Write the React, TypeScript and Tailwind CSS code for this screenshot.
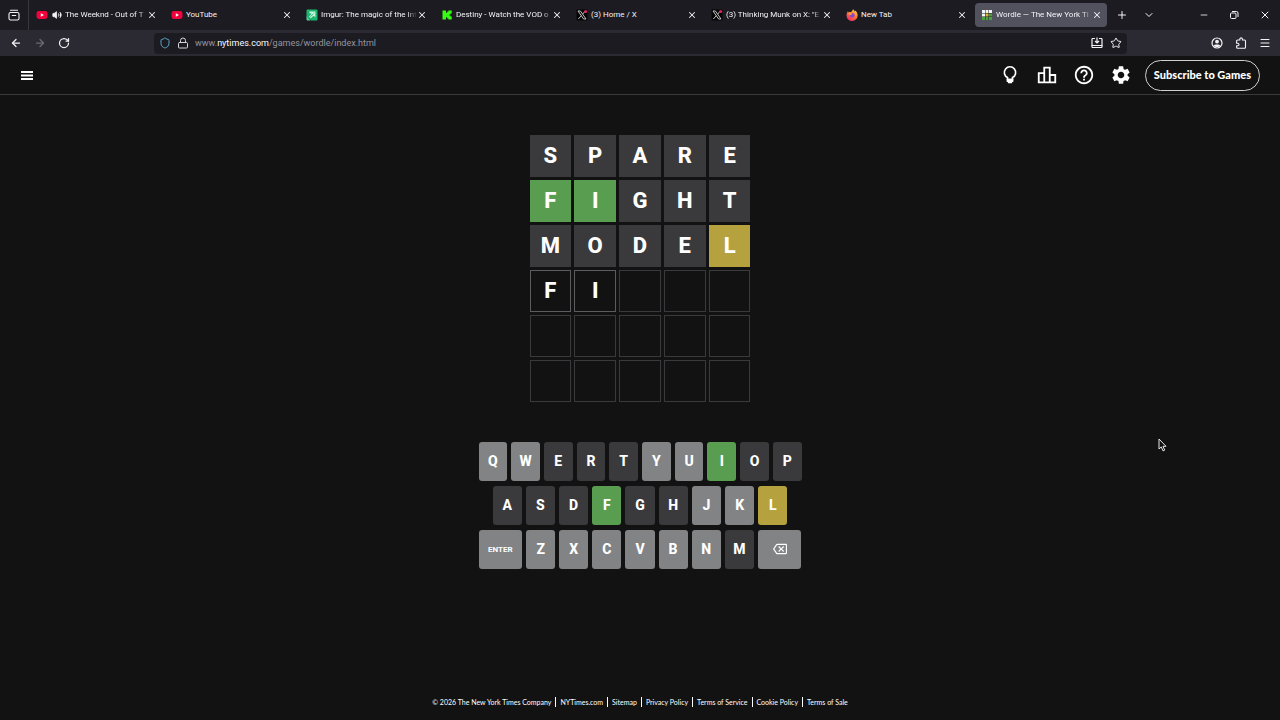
import React from 'react';
import {
  ArrowLeft,
  ArrowRight,
  ChevronDown,
  Lock,
  Menu,
  Minus,
  Plus,
  RotateCw,
  Shield,
  Star,
  Volume2,
  X,
} from 'lucide-react';

type Status = 'correct' | 'present' | 'absent' | 'tbd' | 'empty' | 'unused';

type TabInfo = {
  id: number;
  title: string;
  icon: React.ReactNode;
  playing?: boolean;
  active?: boolean;
  faded?: boolean;
};

const YouTubeIcon = () => (
  <svg className="h-3 w-3 shrink-0" viewBox="0 0 12 12">
    <rect x="0.5" y="2" width="11" height="8" rx="2.4" fill="#f0033c" />
    <path d="M4.8 4.2v3.6L8 6z" fill="#fff" />
  </svg>
);

const ImgurIcon = () => (
  <svg className="h-3 w-3 shrink-0" viewBox="0 0 12 12">
    <path d="M1.5 0.5h9a1 1 0 0 1 1 1v9a1 1 0 0 1-1 1H5L.5 7.5v-6a1 1 0 0 1 1-1z" fill="#1bb76e" />
    <path d="M3.5 2.600h5.900v5.700L7.600 6.700 4.800 9.300 3 7.700l2.800-2.900-2.300-.5z" fill="#c9f5e0" />
    <path d="M7.600 3.900h.6M4.500 7.700l2.800-2.900" stroke="#1bb76e" strokeWidth="0.9" />
    <path d="M.5 7l4 4.500h-3a1 1 0 0 1-1-1z" fill="#4cd49a" />
  </svg>
);

const KickIcon = () => (
  <svg className="h-3 w-3 shrink-0" viewBox="0 0 12 12">
    <path
      d="M1.500 1.500h3.500v2.200h1.200V2.600h1.200V1.500h3.300v3H9.500v1H8.400v1h1.100v1h1.200v3H7.400V9.400H6.200V8.300H5v2.200H1.500z"
      fill="#35ff0e"
    />
  </svg>
);

const XLogoIcon = () => (
  <svg className="h-3 w-3 shrink-0" viewBox="0 0 12 12">
    <rect x="0.5" y="0.5" width="11" height="11" rx="1" fill="#050505" />
    <path d="M2 2h2.400L10 10H7.600z" fill="none" stroke="#d4d4d4" strokeWidth="0.9" />
    <path d="M9.300 2L6.600 5.200M5.300 6.700L2.300 10" stroke="#d4d4d4" strokeWidth="0.9" />
    <circle cx="9.700" cy="2.600" r="1.500" fill="#e0245e" />
  </svg>
);

const FirefoxIcon = () => (
  <svg className="h-3 w-3 shrink-0" viewBox="0 0 12 12">
    <defs>
      <linearGradient id="fox" x1="0.9" y1="0" x2="0.2" y2="1">
        <stop offset="0" stopColor="#ffe14a" />
        <stop offset="0.45" stopColor="#ff7b2e" />
        <stop offset="1" stopColor="#f0246e" />
      </linearGradient>
    </defs>
    <path
      d="M7 .3c1 .7 1.500 1.500 1.700 2.300.5-.2.600-.6.600-1 1.500 1.200 2.300 3 2.300 4.800A5.500 5.500 0 0 1 .5 6.500C.5 4.800 1 3.200 2 2.200l.5 1.200c1-.6 1.700-.5 2.500-.4C5.700 2.200 6.800 1.600 7 .3z"
      fill="url(#fox)"
    />
    <circle cx="6.200" cy="6.300" r="2.400" fill="#8a45d8" />
    <path d="M2.500 3.800c1.800-.4 3 .2 3.900 1.200-.8 1-2 .6-2.300 1.600C2.900 6 2.400 5 2.500 3.800z" fill="#ff9a35" />
  </svg>
);

const WordleIcon = () => (
  <svg className="h-3 w-3 shrink-0" viewBox="0 0 12 12">
    <rect x="1" y="1" width="10" height="10" fill="#222" />
    <path d="M1 1h3v3H1zM4.500 1h3v3h-3zM8 1h3v3H8zM1 4.500h3v3H1z" fill="#f4f4f4" />
    <path d="M4.500 4.500h3v3h-3z" fill="#d4b73f" />
    <path d="M8 4.500h3v3H8zM1 8h3v3H1zM4.500 8h3v3h-3zM8 8h3v3H8z" fill="#4c9e45" />
  </svg>
);

const tabs: TabInfo[] = [
  { id: 1, title: 'The Weeknd - Out of T', icon: <YouTubeIcon />, playing: true, faded: true },
  { id: 2, title: 'YouTube', icon: <YouTubeIcon /> },
  { id: 3, title: 'Imgur: The magic of the Int', icon: <ImgurIcon />, faded: true },
  { id: 4, title: 'Destiny - Watch the VOD o', icon: <KickIcon />, faded: true },
  { id: 5, title: '(3) Home / X', icon: <XLogoIcon /> },
  { id: 6, title: '(3) Thinking Munk on X: "E', icon: <XLogoIcon />, faded: true },
  { id: 7, title: 'New Tab', icon: <FirefoxIcon /> },
  { id: 8, title: 'Wordle — The New York Ti', icon: <WordleIcon />, active: true, faded: true },
];

const guesses = ['SPARE', 'FIGHT', 'MODEL', 'FI', '', ''];

const results: Record<number, Status[]> = {
  0: ['absent', 'absent', 'absent', 'absent', 'absent'],
  1: ['correct', 'correct', 'absent', 'absent', 'absent'],
  2: ['absent', 'absent', 'absent', 'absent', 'present'],
};

const keyStatus: Record<string, Status> = {
  I: 'correct',
  F: 'correct',
  L: 'present',
};
'SPAREGHTMOD'.split('').forEach((letter) => {
  keyStatus[letter] = 'absent';
});

const tileStyles: Record<Status, string> = {
  correct: 'bg-[#599e50]',
  present: 'bg-[#b5a23e]',
  absent: 'bg-[#3a3a3c]',
  tbd: 'border border-[#5c5c5e]',
  empty: 'border border-[#3a3a3c]',
  unused: 'bg-[#818384]',
};

const footerLinks = [
  'NYTimes.com',
  'Sitemap',
  'Privacy Policy',
  'Terms of Service',
  'Cookie Policy',
  'Terms of Sale',
];

const Tab = ({ tab }: { tab: TabInfo }) => (
  <div
    className={`flex h-6 min-w-0 max-w-[132px] flex-1 items-center rounded pr-[5px] pl-[6px] ${
      tab.active ? 'bg-[#52515e]' : ''
    }`}
  >
    {tab.icon}
    {tab.playing && (
      <button aria-label="Mute tab" className="ml-1 shrink-0">
        <Volume2 className="h-[10px] w-[10px]" fill="currentColor" />
      </button>
    )}
    <span
      className={`ml-[3px] min-w-0 flex-1 overflow-hidden whitespace-nowrap ${
        tab.faded ? 'mask-r-from-90%' : ''
      }`}
    >
      {tab.title}
    </span>
    <button aria-label={`Close ${tab.title}`} className="shrink-0">
      <X className="h-[10px] w-[10px]" strokeWidth={2.5} />
    </button>
  </div>
);

const BrowserChrome = () => (
  <div className="font-[Roboto,'Open_Sans',sans-serif] text-[8px] text-[#f3f3f6]">
    {/* Tab strip */}
    <div className="flex h-[30px] items-center bg-[#1c1b22]">
      <button
        aria-label="Firefox View"
        className="flex h-full w-[29px] shrink-0 items-center justify-center border-r border-[#38373f]"
      >
        <svg className="h-3 w-3" viewBox="0 0 12 12" fill="none" stroke="currentColor" strokeWidth="1.100" strokeLinecap="round">
          <rect x="1" y="3.500" width="10" height="7.500" rx="1.600" />
          <path d="M2.500 1.200h7M4.300 6.500h3.400" />
        </svg>
      </button>
      <div className="ml-px flex min-w-0 flex-1 items-center gap-[3px]">
        {tabs.map((tab) => (
          <Tab key={tab.id} tab={tab} />
        ))}
        <button aria-label="New tab" className="ml-[6px] shrink-0">
          <Plus className="h-3 w-3" strokeWidth={2} />
        </button>
        <button aria-label="List all tabs" className="ml-3 shrink-0">
          <ChevronDown className="h-3 w-3" strokeWidth={2} />
        </button>
      </div>
      <div className="flex shrink-0 items-center gap-5 pr-[9px]">
        <button aria-label="Minimize">
          <Minus className="h-[10px] w-[10px]" strokeWidth={2} />
        </button>
        <button aria-label="Restore">
          <svg className="h-[10px] w-[10px]" viewBox="0 0 10 10" fill="none" stroke="currentColor">
            <rect x="1.500" y="3" width="5.500" height="5.500" rx="1" />
            <path d="M3 1.500h4.500a1.500 1.500 0 0 1 1.500 1.500V7" />
          </svg>
        </button>
        <button aria-label="Close window">
          <X className="h-3 w-3" strokeWidth={2} />
        </button>
      </div>
    </div>

    {/* Navigation bar */}
    <div className="flex h-[26px] items-center bg-[#2b2a33]">
      <div className="flex w-[154px] shrink-0 items-center gap-3 pl-[10px]">
        <button aria-label="Back">
          <ArrowLeft className="h-3 w-3" strokeWidth={2.5} />
        </button>
        <button aria-label="Forward" className="text-[#6c6b74]">
          <ArrowRight className="h-3 w-3" strokeWidth={2.5} />
        </button>
        <button aria-label="Reload">
          <RotateCw className="h-3 w-3" strokeWidth={2.5} />
        </button>
      </div>
      <div className="flex h-[21px] min-w-0 flex-1 items-center rounded bg-[#1c1b22] px-[5px]">
        <Shield className="h-3 w-3 shrink-0 text-[#5aa5c4]" />
        <Lock className="ml-[6px] h-3 w-3 shrink-0 text-[#d5d5da]" />
        <a href="#address" className="ml-[6px] flex-1 truncate pt-px text-[9px] text-[#96959d]">
          www.<span className="text-[#fbfbfe]">nytimes.com</span>/games/wordle/index.html
        </a>
        <button aria-label="Install site">
          <svg className="h-3 w-3" viewBox="0 0 12 12" fill="none" stroke="currentColor" strokeWidth="1.200">
            <path d="M4 1.500H1.700a.7.7 0 0 0-.7.7v6.300h10V2.200a.7.7 0 0 0-.7-.7H8" />
            <path d="M6 .5v5M4 4l2 2 2-2M1 10.500h10M1 8.500v2M11 8.500v2" />
          </svg>
        </button>
        <button aria-label="Bookmark" className="ml-[7px]">
          <Star className="h-3 w-3" />
        </button>
      </div>
      <div className="flex w-[153px] shrink-0 items-center justify-end gap-3 pr-[9px]">
        <button aria-label="Account">
          <svg className="h-3 w-3" viewBox="0 0 12 12">
            <circle cx="6" cy="6" r="5" fill="none" stroke="currentColor" strokeWidth="1.200" />
            <circle cx="6" cy="4.600" r="1.900" fill="currentColor" />
            <path d="M2.800 8.500c.6-1.300 5.800-1.300 6.400 0C8.500 9.600 7.300 10 6 10s-2.500-.4-3.200-1.500z" fill="currentColor" />
          </svg>
        </button>
        <button aria-label="Extensions">
          <svg className="h-3 w-3" viewBox="0 0 12 12" fill="none" stroke="currentColor" strokeWidth="1.100" strokeLinejoin="round">
            <path d="M4.800 3V2.200a1.300 1.300 0 0 1 2.600 0V3h2.100a1 1 0 0 1 1 1v6.200a1 1 0 0 1-1 1H2.600a1 1 0 0 1-1-1V8.700h1.200a1.200 1.200 0 0 0 0-2.400H1.600V4a1 1 0 0 1 1-1z" />
          </svg>
        </button>
        <button aria-label="Application menu">
          <Menu className="h-3 w-3" />
        </button>
      </div>
    </div>
  </div>
);

const GameHeader = () => (
  <header className="flex h-[39px] items-center border-b border-[#3a3a3c] px-5 text-white">
    <button aria-label="Open navigation menu">
      <svg className="h-[14px] w-[14px]" viewBox="0 0 14 14" fill="currentColor">
        <path d="M1 3h12v2H1zM1 6.500h12v2H1zM1 10h12v2H1z" />
      </svg>
    </button>
    <div className="ml-auto flex items-center gap-[15px]">
      <button aria-label="Hints">
        <svg className="h-[22px] w-[22px]" viewBox="0 0 24 24" fill="none" stroke="currentColor" strokeWidth="1.800">
          <path d="M9.300 17v-2.200A6.200 6.200 0 1 1 14.700 14.800V17z" />
          <path d="M8.400 16h7.200v3.500h-1.300V21H9.700v-1.500H8.400z" fill="currentColor" stroke="none" />
        </svg>
      </button>
      <button aria-label="Statistics">
        <svg className="h-[22px] w-[22px]" viewBox="0 0 24 24" fill="currentColor">
          <path d="M16 11V3H8v6H2v12h20V11h-6zm-6-6h4v14h-4V5zm-6 6h4v8H4v-8zm16 8h-4v-6h4v6z" />
        </svg>
      </button>
      <button aria-label="Help">
        <svg className="h-[22px] w-[22px]" viewBox="0 0 24 24" fill="currentColor">
          <path d="M11 18h2v-2h-2v2zm1-16C6.480 2 2 6.480 2 12s4.480 10 10 10 10-4.480 10-10S17.520 2 12 2zm0 18c-4.410 0-8-3.590-8-8s3.590-8 8-8 8 3.590 8 8-3.590 8-8 8zm0-14c-2.210 0-4 1.790-4 4h2c0-1.100.9-2 2-2s2 .9 2 2c0 2-3 1.750-3 5h2c0-2.250 3-2.500 3-5 0-2.210-1.790-4-4-4z" />
        </svg>
      </button>
      <button aria-label="Settings">
        <svg className="h-[22px] w-[22px]" viewBox="0 0 24 24" fill="currentColor">
          <path d="M19.140 12.940c.04-.3.06-.61.06-.94 0-.32-.02-.64-.07-.94l2.030-1.580c.18-.14.23-.41.12-.61l-1.920-3.320c-.12-.22-.37-.29-.59-.22l-2.390.96c-.5-.38-1.030-.7-1.620-.94l-.36-2.540c-.04-.24-.24-.41-.48-.41h-3.840c-.24 0-.43.17-.47.41l-.36 2.540c-.59.24-1.130.57-1.620.94l-2.390-.96c-.22-.08-.47 0-.59.22L2.740 8.870c-.12.21-.08.47.12.61l2.030 1.580c-.05.3-.09.63-.09.94s.02.64.07.94l-2.030 1.580c-.18.14-.23.41-.12.61l1.920 3.320c.12.22.37.29.59.22l2.390-.96c.5.38 1.030.7 1.620.94l.36 2.540c.05.24.24.41.48.41h3.840c.24 0 .44-.17.47-.41l.36-2.540c.59-.24 1.130-.56 1.620-.94l2.390.96c.22.08.47 0 .59-.22l1.920-3.320c.12-.22.07-.47-.12-.61l-2.010-1.580zM12 15.600c-1.980 0-3.600-1.620-3.600-3.600s1.620-3.600 3.600-3.600 3.600 1.620 3.600 3.600-1.620 3.600-3.600 3.600z" />
        </svg>
      </button>
    </div>
    <button className="ml-[13px] h-[31px] rounded-full border border-[#d0d0d0] px-2 font-[Lato,'Liberation_Sans',sans-serif] text-[11px] font-black whitespace-nowrap">
      Subscribe to Games
    </button>
  </header>
);

const Board = () => (
  <div className="grid w-[221px] grid-cols-5 gap-[3px]">
    {guesses.map((guess, row) =>
      [0, 1, 2, 3, 4].map((col) => {
        const letter = guess[col] ?? '';
        const status = results[row]?.[col] ?? (letter ? 'tbd' : 'empty');
        return (
          <div
            key={`${row}-${col}`}
            className={`flex h-[42px] items-center justify-center text-[22px] leading-none font-extrabold text-white ${tileStyles[status]}`}
          >
            {letter}
          </div>
        );
      })
    )}
  </div>
);

const Key = ({ letter }: { letter: string }) => (
  <button
    className={`h-[39px] min-w-0 flex-1 rounded-[3px] pb-[2px] text-[14px] leading-none font-extrabold text-white ${
      tileStyles[keyStatus[letter] ?? 'unused']
    }`}
  >
    {letter}
  </button>
);

const Keyboard = () => (
  <div className="flex w-[323px] flex-col gap-[5px]">
    <div className="flex gap-1">
      {'QWERTYUIOP'.split('').map((letter) => (
        <Key key={letter} letter={letter} />
      ))}
    </div>
    <div className="flex gap-1 px-[14px]">
      {'ASDFGHJKL'.split('').map((letter) => (
        <Key key={letter} letter={letter} />
      ))}
    </div>
    <div className="flex gap-1">
      <button className="h-[39px] min-w-0 flex-[1.5] rounded-[3px] bg-[#818384] text-[8px] font-bold text-white">
        ENTER
      </button>
      {'ZXCVBNM'.split('').map((letter) => (
        <Key key={letter} letter={letter} />
      ))}
      <button
        aria-label="Backspace"
        className="flex h-[39px] min-w-0 flex-[1.5] items-center justify-center rounded-[3px] bg-[#818384] pb-[2px] text-white"
      >
        <svg className="h-[14px] w-[14px]" viewBox="0 0 24 24" fill="currentColor">
          <path d="M22 3H7c-.69 0-1.230.35-1.590.88L0 12l5.410 8.110c.36.53.9.89 1.590.89h15c1.100 0 2-.9 2-2V5c0-1.100-.9-2-2-2zm0 16H7.070L2.400 12l4.660-7H22v14zm-11.590-2L14 13.410 17.590 17 19 15.590 15.410 12 19 8.410 17.590 7 14 10.590 10.410 7 9 8.410 12.590 12 9 15.590z" />
        </svg>
      </button>
    </div>
  </div>
);

const App = () => {
  return (
    <div className="relative flex min-h-screen flex-col bg-[#121213] font-[Roboto,'Liberation_Sans',sans-serif]">
      <BrowserChrome />
      <GameHeader />

      <main className="flex flex-1 flex-col items-center pt-10">
        <Board />
        <div className="mt-10">
          <Keyboard />
        </div>
      </main>

      <footer className="flex items-center justify-center pb-3 font-[Lato,'Liberation_Sans',sans-serif] text-[7px] leading-3 text-white">
        <span className="pr-[4px]">© 2026 The New York Times Company</span>
        {footerLinks.map((link) => (
          <a key={link} href="#footer" className="border-l border-white px-[4px] leading-[10px] last:pr-0">
            {link}
          </a>
        ))}
      </footer>

      {/* Mouse pointer */}
      <svg className="pointer-events-none absolute top-[438px] left-[1158px] h-[14px] w-[9px]" viewBox="0 0 9 14">
        <path
          d="M1 1v10l2.300-2.100 1.700 4 1.700-.8-1.700-3.800H8z"
          fill="#121213"
          stroke="#e6e6e6"
          strokeWidth="1"
        />
      </svg>
    </div>
  );
};

export default App;
